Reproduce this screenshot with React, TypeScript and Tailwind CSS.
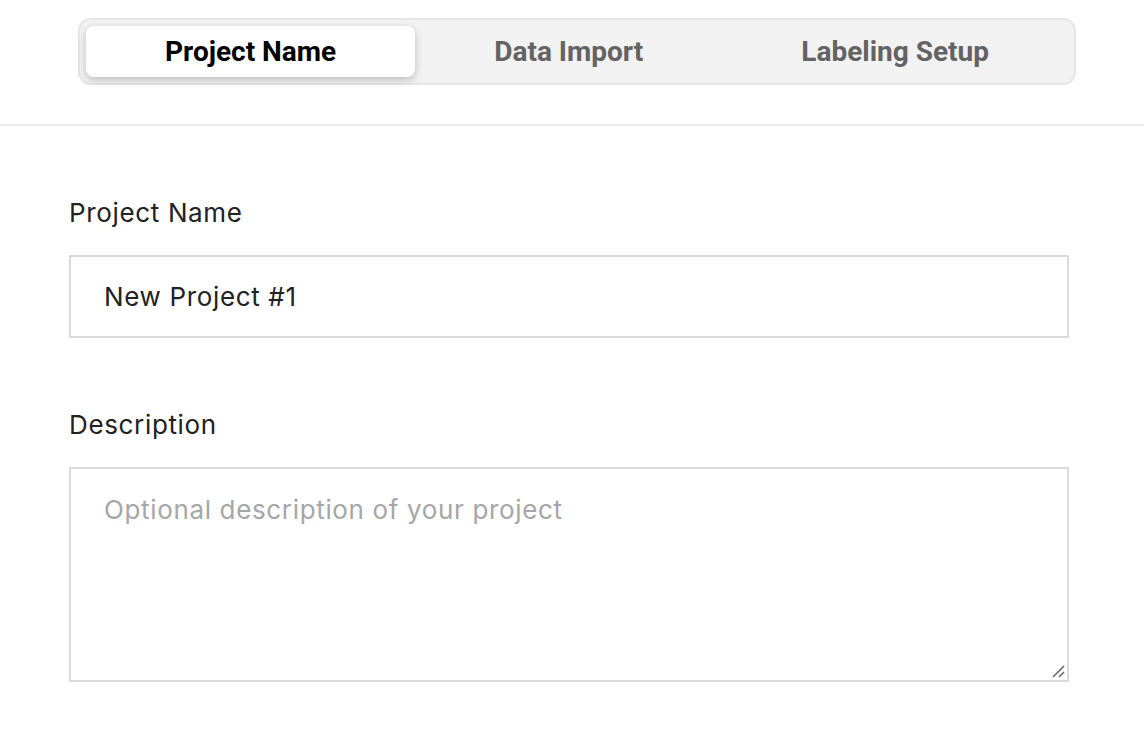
import React from "react";

export default function App() {
  const tabs = ["Project Name", "Data Import", "Labeling Setup"];
  return (
    <div className="w-[1144px] h-[748px] bg-white overflow-hidden" style={{ fontFamily: "Inter, 'Noto Sans', sans-serif" }}>
      <div className="pt-[18px] pb-[39px] border-b-2 border-[#ebebeb]">
        <div className="ml-[78px] w-[998px] h-[67px] rounded-[13px] border-2 border-[#e6e6e6] bg-[#f2f2f2] p-[6px] flex">
          {tabs.map((t, i) => (
            <div
              key={t}
              className={
                "flex-auto flex items-center justify-center rounded-[8px] text-[28px] font-bold " +
                (i === 0
                  ? "bg-white text-black shadow-[0_3px_8px_rgba(0,0,0,0.22)]"
                  : "text-[#636363]")
              }
              style={{ fontFamily: "Roboto, sans-serif" }}
            >
              {t}
            </div>
          ))}
        </div>
      </div>
      <div className="ml-[69px] w-[1000px] pt-[72px] text-[26px] tracking-[0.65px]">
        <div className="leading-[30px] text-[#222]">Project Name</div>
        <div className="mt-[27px] h-[83px] border-2 border-[#dadada] flex items-center pl-[33px] text-[#222]">
          New Project #1
        </div>
        <div className="mt-[72px] leading-[30px] text-[#222]">Description</div>
        <div className="relative mt-[27px] h-[215px] border-2 border-[#dadada] pl-[33px] pt-[26px] leading-[30px] text-[#a6a6a6]">
          Optional description of your project
          <svg className="absolute right-[1px] bottom-[1px]" width="16" height="16" viewBox="0 0 16 16">
            <line x1="3" y1="14" x2="14" y2="3" stroke="#666" strokeWidth="1.6" />
            <line x1="9" y1="14" x2="14" y2="9" stroke="#666" strokeWidth="1.6" />
          </svg>
        </div>
      </div>
    </div>
  );
}
